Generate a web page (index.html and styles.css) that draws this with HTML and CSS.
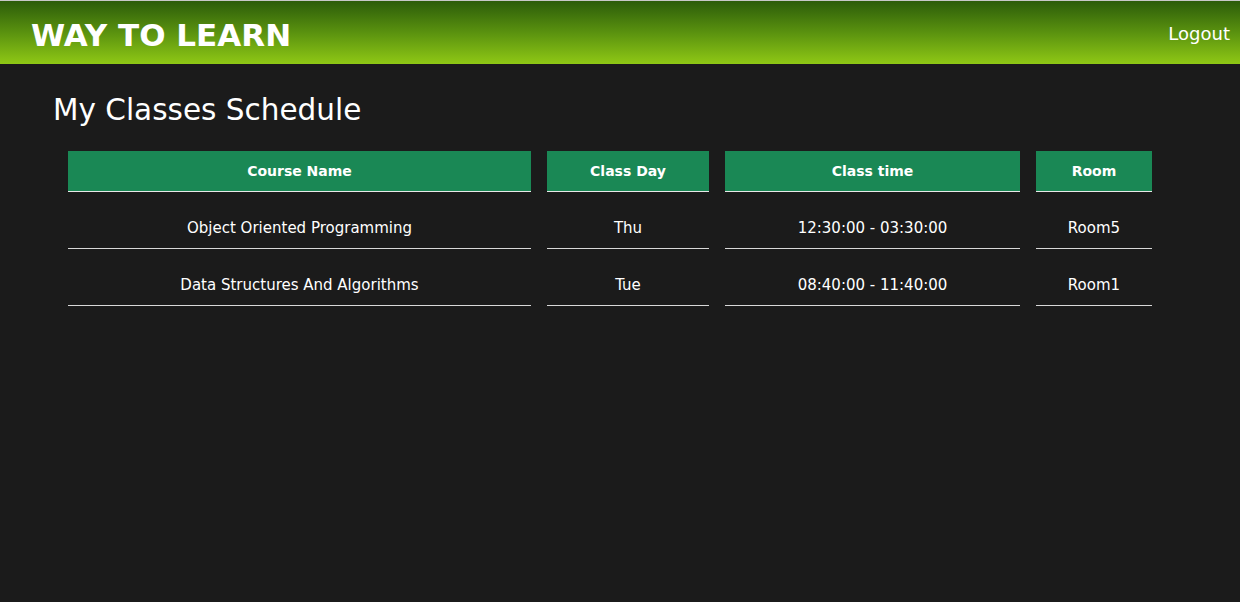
FILE: index.html
```html
<!DOCTYPE html>
<html>
<head>
<meta charset="utf-8">
<title>Way To Learn</title>
<link rel="stylesheet" href="styles.css">
</head>
<body>
<header class="topbar">
  <div class="brand">WAY TO LEARN</div>
  <a class="logout" href="#">Logout</a>
</header>
<main class="content">
  <h1 class="page-title">My Classes Schedule</h1>
  <table class="schedule">
    <colgroup>
      <col class="c-course">
      <col class="c-day">
      <col class="c-time">
      <col class="c-room">
    </colgroup>
    <thead>
      <tr>
        <th>Course Name</th>
        <th>Class Day</th>
        <th>Class time</th>
        <th>Room</th>
      </tr>
    </thead>
    <tbody>
      <tr>
        <td>Object Oriented Programming</td>
        <td>Thu</td>
        <td>12:30:00 - 03:30:00</td>
        <td>Room5</td>
      </tr>
      <tr>
        <td>Data Structures And Algorithms</td>
        <td>Tue</td>
        <td>08:40:00 - 11:40:00</td>
        <td>Room1</td>
      </tr>
    </tbody>
  </table>
</main>
</body>
</html>
```
FILE: styles.css
```css
html, body {
  margin: 0;
  padding: 0;
  background: #1b1b1b;
  color: #ffffff;
  font-family: "Comic Sans MS", "DejaVu Sans", sans-serif;
}

.topbar {
  display: flex;
  align-items: center;
  justify-content: space-between;
  height: 63px;
  border-top: 1px solid #c8c8c8;
  background: linear-gradient(to bottom, #2c5c0a 0%, #5a920f 50%, #8fc815 100%);
  padding: 0 10px 0 31px;
}

.brand {
  font-size: 31px;
  font-weight: bold;
  letter-spacing: 0;
  margin-top: 4px;
}

.logout {
  color: #ffffff;
  text-decoration: none;
  font-size: 18px;
  margin-top: 2px;
}

.content {
  padding: 0 52px;
}

.page-title {
  margin: 0;
  padding: 26px 0 0 1px;
  font-size: 29.5px;
  font-weight: normal;
  line-height: 40px;
  height: 61px;
}

.schedule {
  border-collapse: separate;
  border-spacing: 16px 0;
  table-layout: fixed;
  width: 1116px;
}

.c-course { width: 463px; }
.c-day { width: 162px; }
.c-time { width: 295px; }
.c-room { width: 116px; }

.schedule th {
  background: #1a8855;
  height: 40px;
  padding: 0;
  font-size: 14px;
  font-weight: bold;
  border-bottom: 1px solid #e8e8e8;
  text-align: center;
}

.schedule td {
  height: 40px;
  padding: 16px 0 0;
  font-size: 15px;
  text-align: center;
  border-bottom: 1px solid #d8d8d8;
}
```
